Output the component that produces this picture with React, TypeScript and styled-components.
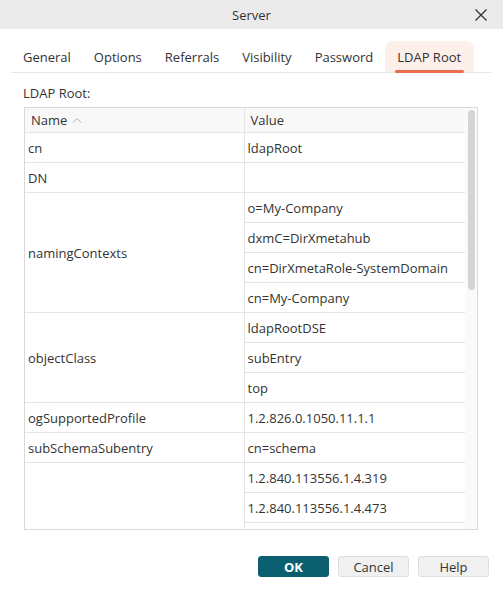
import React from 'react';
import styled, { createGlobalStyle } from 'styled-components';

const GlobalStyle = createGlobalStyle`
  html, body {
    margin: 0;
    padding: 0;
    background: #ffffff;
  }
  body {
    font-family: "Open Sans", "Noto Sans", sans-serif;
    color: #333333;
  }
`;

interface Entry {
  name: string;
  values: string[];
}

const entries: Entry[] = [
  { name: 'cn', values: ['ldapRoot'] },
  { name: 'DN', values: [''] },
  {
    name: 'namingContexts',
    values: ['o=My-Company', 'dxmC=DirXmetahub', 'cn=DirXmetaRole-SystemDomain', 'cn=My-Company'],
  },
  { name: 'objectClass', values: ['ldapRootDSE', 'subEntry', 'top'] },
  { name: 'ogSupportedProfile', values: ['1.2.826.0.1050.11.1.1'] },
  { name: 'subSchemaSubentry', values: ['cn=schema'] },
  {
    name: '',
    values: ['1.2.840.113556.1.4.319', '1.2.840.113556.1.4.473', ''],
  },
];

const tabs = ['General', 'Options', 'Referrals', 'Visibility', 'Password', 'LDAP Root'];

const App = () => {
  return (
    <>
      <GlobalStyle />
      <Window>
        <TitleBar>
          <Title>Server</Title>
          <CloseButton>
            <svg width="14" height="14" viewBox="0 0 14 14">
              <path d="M1.5 1.5 L12.5 12.5 M12.5 1.5 L1.5 12.5" stroke="#333" strokeWidth="1.3" fill="none" />
            </svg>
          </CloseButton>
        </TitleBar>
        <Body>
          <TabBar>
            {tabs.map((t) => (
              <Tab key={t} $active={t === 'LDAP Root'}>
                {t}
              </Tab>
            ))}
          </TabBar>
          <Label>LDAP Root:</Label>
          <Frame>
            <TableArea>
              <Table>
                <colgroup>
                  <col style={{ width: 219 }} />
                  <col style={{ width: 221 }} />
                </colgroup>
                <thead>
                  <tr>
                    <Th>
                      Name
                      <SortIcon viewBox="0 0 10 6" width="10" height="6">
                        <path d="M1 5.5 L5 1.5 L9 5.5" stroke="#aaa" strokeWidth="1" fill="none" />
                      </SortIcon>
                    </Th>
                    <Th>Value</Th>
                  </tr>
                </thead>
                <tbody>
                  {entries.map((e, i) =>
                    e.values.map((v, j) => (
                      <tr key={`${i}-${j}`}>
                        {j === 0 && <NameCell rowSpan={e.values.length}>{e.name}</NameCell>}
                        <ValueCell>{v}</ValueCell>
                      </tr>
                    ))
                  )}
                </tbody>
              </Table>
            </TableArea>
            <ScrollTrack>
              <ScrollThumb />
            </ScrollTrack>
          </Frame>
          <Footer>
            <Button $primary>OK</Button>
            <Button>Cancel</Button>
            <Button>Help</Button>
          </Footer>
        </Body>
      </Window>
    </>
  );
};

export default App;

const Window = styled.div`
  width: 503px;
  height: 591px;
  display: flex;
  flex-direction: column;
  background: #ffffff;
  overflow: hidden;
`;

const TitleBar = styled.div`
  height: 29px;
  background: #ebebeb;
  display: flex;
  align-items: center;
  justify-content: center;
  position: relative;
`;

const Title = styled.div`
  font-size: 13px;
  color: #333;
`;

const CloseButton = styled.div`
  position: absolute;
  right: 15px;
  top: 8px;
  width: 14px;
  height: 14px;
  display: flex;
`;

const Body = styled.div`
  flex: 1;
  display: flex;
  flex-direction: column;
  padding: 12px 12px 0 11px;
`;

const TabBar = styled.div`
  display: flex;
  align-items: stretch;
  height: 31px;
  border-bottom: 1px solid #e6e6e6;
`;

const Tab = styled.div<{ $active?: boolean }>`
  position: relative;
  display: flex;
  align-items: center;
  padding: 0 11.5px;
  font-size: 13px;
  color: #333;
  border-radius: 8px 8px 0 0;
  background: ${(p) => (p.$active ? '#fdefe9' : 'transparent')};
  &:first-child {
    padding-left: 12px;
  }
  &:last-child {
    padding: 0 12.5px;
  }
  &::after {
    content: '';
    display: ${(p) => (p.$active ? 'block' : 'none')};
    position: absolute;
    left: 10px;
    right: 10px;
    bottom: -1px;
    height: 3px;
    border-radius: 2px;
    background: #ea6e4d;
  }
`;

const Label = styled.div`
  font-size: 13px;
  padding: 13px 0 6px 12px;
  line-height: 15px;
`;

const Frame = styled.div`
  margin-left: 13px;
  width: 452px;
  height: 421px;
  border: 1px solid #d9d9d9;
  display: flex;
  overflow: hidden;
`;

const TableArea = styled.div`
  width: 440px;
  overflow: hidden;
`;

const Table = styled.table`
  width: 440px;
  border-collapse: collapse;
  table-layout: fixed;
  font-size: 13px;
`;

const Th = styled.th`
  height: 24px;
  padding: 0 0 0 6px;
  text-align: left;
  font-weight: normal;
  background: #f8f8f8;
  border-bottom: 1px solid #e4e4e4;
  border-right: 1px solid #e4e4e4;
  color: #333;
`;

const SortIcon = styled.svg`
  margin-left: 5px;
  vertical-align: 2px;
`;

const NameCell = styled.td`
  padding: 0 0 0 3px;
  vertical-align: middle;
  border-bottom: 1px solid #e4e4e4;
  border-right: 1px solid #e4e4e4;
`;

const ValueCell = styled.td`
  height: 29px;
  padding: 0 0 0 3px;
  border-bottom: 1px solid #e4e4e4;
  border-right: 1px solid #e4e4e4;
  white-space: nowrap;
  overflow: hidden;
`;

const ScrollTrack = styled.div`
  width: 12px;
  background: #fafafa;
  display: flex;
  justify-content: center;
  padding-top: 2px;
`;

const ScrollThumb = styled.div`
  width: 7px;
  height: 180px;
  border-radius: 4px;
  background: #d4d4d4;
`;

const Footer = styled.div`
  display: flex;
  justify-content: flex-end;
  gap: 9px;
  padding: 26px 2px 0 0;
`;

const Button = styled.div<{ $primary?: boolean }>`
  width: 71px;
  height: 21px;
  box-sizing: border-box;
  display: flex;
  align-items: center;
  justify-content: center;
  font-size: 13px;
  border-radius: 3px;
  font-weight: ${(p) => (p.$primary ? 700 : 400)};
  color: ${(p) => (p.$primary ? '#ffffff' : '#333')};
  background: ${(p) => (p.$primary ? '#0b5f6e' : '#f0f0f0')};
  border: 1px solid ${(p) => (p.$primary ? '#0b5f6e' : '#dedede')};
`;
